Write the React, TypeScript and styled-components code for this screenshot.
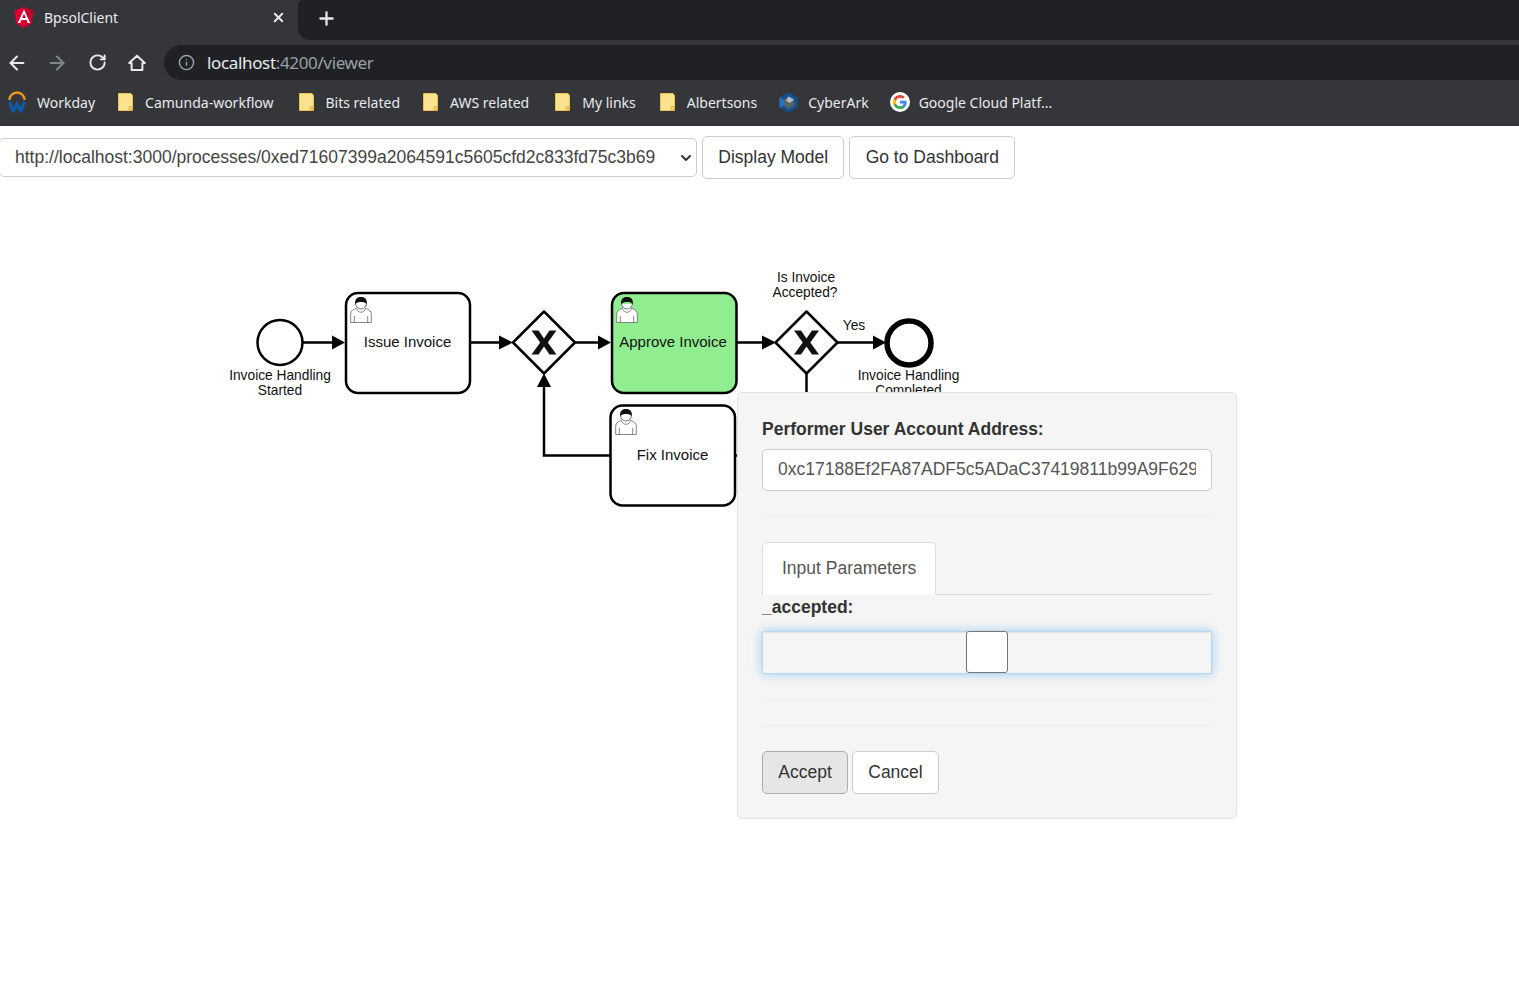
import styled, { createGlobalStyle } from "styled-components";
import { ArrowLeft, ArrowRight, ChevronDown, Info, Plus, RotateCw, X } from "lucide-react";

const GlobalStyle = createGlobalStyle`
  html, body {
    margin: 0;
    height: 100%;
    overflow: hidden;
    background: #fff;
  }
  * { box-sizing: border-box; }
`;

const CHROME_FONT = `"Noto Sans", "Open Sans", sans-serif`;
const PAGE_FONT = `"Liberation Sans", Arial, sans-serif`;

function AngularIcon() {
  return (
    <svg width="20" height="22" viewBox="0 0 20 22">
      <path d="M10 0 L19.4 3.4 L17.9 16.4 L10 21 Z" fill="#c3002f" />
      <path d="M10 0 L0.6 3.4 L2.1 16.4 L10 21 Z" fill="#dd0031" />
      <path
        d="M10 2.6 L3.8 16 H6.2 L7.4 13 H12.6 L13.8 16 H16.2 Z M8.2 11 L10 6.6 L11.8 11 Z"
        fill="#fff"
      />
    </svg>
  );
}

function HomeIcon() {
  return (
    <svg width="18" height="18" viewBox="0 0 18 18" fill="none">
      <path
        d="M1.2 9 L9 1.8 L16.8 9 H14.4 V16 H3.6 V9 Z"
        stroke="#e8eaed"
        strokeWidth="2"
        strokeLinejoin="round"
      />
    </svg>
  );
}

function FolderIcon() {
  return (
    <svg width="15" height="18" viewBox="0 0 15 18">
      <path d="M0.5 0.5 H13 L14.5 2.5 V17.5 H0.5 Z" fill="#fde28f" stroke="#ecc04f" />
      <path d="M11 13.500 V17 H14 V13.500 Z" fill="#f5d273" stroke="#d9a93a" strokeWidth="0.6" />
    </svg>
  );
}

function WorkdayIcon() {
  return (
    <svg width="18" height="22" viewBox="0 0 18 22" fill="none">
      <path d="M1.500 9 A7.500 7.500 0 0 1 16.500 9" stroke="#e8961e" strokeWidth="2.400" />
      <path d="M1.500 10.500 L5 20.500 L9 13 L13 20.500 L16.500 10.500" stroke="#0b5cab" strokeWidth="3" />
    </svg>
  );
}

function CyberArkIcon() {
  return (
    <svg width="19" height="21" viewBox="0 0 19 21">
      <path d="M9.500 0.500 L18.500 5.500 V15.500 L9.500 20.500 L0.500 15.500 V5.500 Z" fill="#15508f" />
      <path d="M0.500 5.500 L5 8 V13.500 L0.500 15.500 Z" fill="#2a74bd" />
      <path d="M9.500 4.500 L15 7.500 V14 L9.500 17 L5 14 V8 Z" fill="#5a636c" />
      <path d="M9.500 4.500 L15 7.500 L10.500 11 L7 8.500 Z" fill="#b4bcc4" />
    </svg>
  );
}

function GoogleIcon() {
  return (
    <svg width="20" height="20" viewBox="0 0 48 48">
      <circle cx="24" cy="24" r="24" fill="#fff" />
      <path d="M40 24.6c0-1.2-.1-2.3-.3-3.4H24v6.4h9c-.4 2.1-1.6 3.8-3.3 5v4.2h5.4c3.1-2.9 4.9-7.1 4.9-12.2z" fill="#4285f4" />
      <path d="M24 41c4.5 0 8.3-1.5 11.1-4.1l-5.4-4.2c-1.5 1-3.4 1.6-5.7 1.6-4.4 0-8.1-2.9-9.4-6.9H9v4.3C11.8 37.2 17.4 41 24 41z" fill="#34a853" />
      <path d="M14.6 27.4c-.3-1-.5-2.1-.5-3.4s.2-2.3.5-3.4v-4.3H9C7.900 18.600 7 21.200 7 24s.9 5.400 2 7.700z" fill="#fbbc05" />
      <path d="M24 13.700c2.500 0 4.700.9 6.500 2.500l4.800-4.800C32.300 8.700 28.500 7 24 7 17.400 7 11.800 10.800 9 16.300l5.600 4.300c1.300-4 5-6.900 9.400-6.900z" fill="#ea4335" />
    </svg>
  );
}

const bookmarks = [
  { label: "Workday", icon: <WorkdayIcon />, gap: 11, shift: 0 },
  { label: "Camunda-workflow", icon: <FolderIcon />, gap: 12, shift: -1 },
  { label: "Bits related", icon: <FolderIcon />, gap: 12, shift: 1 },
  { label: "AWS related", icon: <FolderIcon />, gap: 12, shift: -1 },
  { label: "My links", icon: <FolderIcon />, gap: 12, shift: 2 },
  { label: "Albertsons", icon: <FolderIcon />, gap: 12, shift: 0 },
  { label: "CyberArk", icon: <CyberArkIcon />, gap: 10, shift: -2 },
  { label: "Google Cloud Platf...", icon: <GoogleIcon />, gap: 9, shift: -3 },
];

function UserGlyph({ x, y }: { x: number; y: number }) {
  return (
    <g transform={`translate(${x} ${y})`}>
      <path
        d="M0.700 25.500 V17 C0.700 13.800 3 12.800 6.500 11.300 L8.500 9.500 H13.500 L15.500 11.300 C19 12.800 21.300 13.800 21.300 17 V25.500 Z"
        fill="#fff"
        stroke="#777"
        strokeWidth="0.900"
      />
      <path
        d="M4.300 25.500 V19 M17.700 25.500 V19 M6.500 11.500 C7.500 16.500 14.500 16.500 15.500 11.500"
        fill="none"
        stroke="#777"
        strokeWidth="0.900"
      />
      <path d="M5.600 7 C5.600 9.800 8.500 12 11 12 C13.500 12 16.400 9.800 16.400 7" fill="#fff" stroke="#666" strokeWidth="0.900" />
      <path d="M5.200 7.500 C4.200 1.800 8 0 11 0 C14 0 17.800 1.800 16.800 7.500 C15.600 5.400 13.500 4.600 11 5 C8.500 4.600 6.400 5.400 5.200 7.500 Z" fill="#111" />
    </g>
  );
}

function Gateway({ cx, cy }: { cx: number; cy: number }) {
  const cross: [number, number][] = [
    [-12.5, -12], [-5.5, -12], [0, -4], [5.5, -12], [12.5, -12], [3.8, 0],
    [12.5, 12], [5.5, 12], [0, 4], [-5.5, 12], [-12.5, 12], [-3.8, 0],
  ];
  return (
    <g>
      <path
        d={`M${cx} ${cy - 31} L${cx + 31} ${cy} L${cx} ${cy + 31} L${cx - 31} ${cy} Z`}
        fill="#fff"
        stroke="#000"
        strokeWidth="2.500"
        strokeLinejoin="round"
      />
      <polygon points={cross.map(([a, b]) => `${cx + a},${cy + b}`).join(" ")} fill="#111" />
    </g>
  );
}

function Flow({ d }: { d: string }) {
  return <path d={d} fill="none" stroke="#000" strokeWidth="2.500" />;
}

function ArrowHead({ points }: { points: string }) {
  return <polygon points={points} fill="#000" />;
}

function Diagram() {
  return (
    <Canvas viewBox="0 179 1519 340" width="1519" height="340">
      <Flow d="M302 342.500 H335" />
      <ArrowHead points="332,335.500 345,342.500 332,349.500" />
      <Flow d="M470 342.500 H502" />
      <ArrowHead points="499,335.500 513,342.500 499,349.500" />
      <Flow d="M575 342.500 H600" />
      <ArrowHead points="598,335.500 611,342.500 598,349.500" />
      <Flow d="M737 342.500 H765" />
      <ArrowHead points="762,335.500 776,342.500 762,349.500" />
      <Flow d="M838 342.500 H875" />
      <ArrowHead points="873,335.500 886,342.500 873,349.500" />
      <Flow d="M610 455.500 H544 V385" />
      <Flow d="M806.500 374 V455.500 H736" />

      <circle cx="280" cy="342.500" r="22.500" fill="#fff" stroke="#000" strokeWidth="2.500" />
      <Task x={346} y={293} width={124} height={100} rx={12} />
      <Gateway cx={544} cy={342.500} />
      <ArrowHead points="537,387 544,373.500 551,387" />
      <Task x={612} y={293} width={124.500} height={100} rx={12} $active />
      <Task x={610.500} y={405.500} width={124.500} height={100} rx={12} />
      <Gateway cx={806.500} cy={342.500} />
      <circle cx="909" cy="343" r="22" fill="#fff" stroke="#000" strokeWidth="5.500" />

      <UserGlyph x={350} y={297} />
      <UserGlyph x={616} y={297} />
      <UserGlyph x={615} y={409} />

      <TaskLabel x={407.500} y={347}>Issue Invoice</TaskLabel>
      <TaskLabel x={673} y={347}>Approve Invoice</TaskLabel>
      <TaskLabel x={672.500} y={460}>Fix Invoice</TaskLabel>

      <FlowLabel x={280} y={380}>Invoice Handling</FlowLabel>
      <FlowLabel x={280} y={395}>Started</FlowLabel>
      <FlowLabel x={806} y={282}>Is Invoice</FlowLabel>
      <FlowLabel x={805} y={297}>Accepted?</FlowLabel>
      <FlowLabel x={854} y={330}>Yes</FlowLabel>
      <FlowLabel x={908.500} y={380}>Invoice Handling</FlowLabel>
      <FlowLabel x={908.500} y={395}>Completed</FlowLabel>
    </Canvas>
  );
}

export default function App() {
  return (
    <>
      <GlobalStyle />
      <Browser>
        <TabStrip>
          <Tab>
            <AngularIcon />
            <TabTitle>BpsolClient</TabTitle>
            <X size={15} color="#e8eaed" strokeWidth={3} />
          </Tab>
          <TabRest>
            <Plus size={21} color="#e8eaed" strokeWidth={2.6} />
          </TabRest>
        </TabStrip>
        <Toolbar>
          <NavIcon><ArrowLeft size={22} color="#e8eaed" strokeWidth={2.2} /></NavIcon>
          <NavIcon><ArrowRight size={22} color="#80868b" strokeWidth={2.2} /></NavIcon>
          <NavIcon><RotateCw size={19} color="#e8eaed" strokeWidth={2.4} /></NavIcon>
          <NavIcon><HomeIcon /></NavIcon>
          <Omnibox>
            <Info size={17} color="#9aa0a6" strokeWidth={2} />
            <Url>
              localhost<UrlRest>:4200/viewer</UrlRest>
            </Url>
          </Omnibox>
        </Toolbar>
        <BookmarkBar>
          {bookmarks.map((b) => (
            <Bookmark key={b.label} $gap={b.gap} $shift={b.shift}>
              {b.icon}
              <span>{b.label}</span>
            </Bookmark>
          ))}
        </BookmarkBar>
      </Browser>

      <Page>
        <ActionRow>
          <SelectWrap>
            <ProcessSelect defaultValue="p1">
              <option value="p1">http://localhost:3000/processes/0xed71607399a2064591c5605cfd2c833fd75c3b69</option>
            </ProcessSelect>
            <SelectChevron>
              <ChevronDown size={16} color="#333" strokeWidth={3} />
            </SelectChevron>
          </SelectWrap>
          <Button>Display Model</Button>
          <Button>Go to Dashboard</Button>
        </ActionRow>
        <Diagram />
        <Panel>
          <FieldLabel>Performer User Account Address:</FieldLabel>
          <TextInput readOnly value="0xc17188Ef2FA87ADF5c5ADaC37419811b99A9F62983f1" />
          <Rule />
          <TabList>
            <TabItem>Input Parameters</TabItem>
          </TabList>
          <FieldLabel>_accepted:</FieldLabel>
          <CheckField>
            <BigCheckbox type="checkbox" />
          </CheckField>
          <Rule />
          <Rule />
          <ButtonRow>
            <Button $pressed>Accept</Button>
            <Button>Cancel</Button>
          </ButtonRow>
        </Panel>
      </Page>
    </>
  );
}

const Browser = styled.header`
  height: 126px;
  background: #35363a;
  font-family: ${CHROME_FONT};
  color: #e8eaed;
`;

const TabStrip = styled.div`
  display: flex;
  height: 40px;
`;

const Tab = styled.div`
  width: 298px;
  display: flex;
  align-items: center;
  padding: 0 12px 5px 14px;
  svg:first-child {
    flex: none;
  }
`;

const TabTitle = styled.span`
  flex: 1;
  margin-left: 10px;
  font-size: 14px;
`;

const TabRest = styled.div`
  flex: 1;
  display: flex;
  align-items: center;
  padding: 0 0 4px 18px;
  background: #202124;
  border-radius: 5px 0 0 12px;
`;

const Toolbar = styled.div`
  height: 40px;
  padding: 5px 0 0 0;
  display: flex;
  align-items: center;
`;

const NavIcon = styled.div`
  width: 40px;
  margin-left: -3px;
  margin-right: 3px;
  display: flex;
  justify-content: center;
`;

const Omnibox = styled.div`
  flex: 1;
  height: 35px;
  margin-left: 4px;
  padding-left: 14px;
  display: flex;
  align-items: center;
  gap: 12px;
  background: #202124;
  border-radius: 18px 0 0 18px;
`;

const Url = styled.span`
  font-size: 17px;
  letter-spacing: -0.35px;
  color: #e8eaed;
`;

const UrlRest = styled.span`
  color: #9aa0a6;
`;

const BookmarkBar = styled.nav`
  height: 46px;
  padding: 0 0 2px 8px;
  display: flex;
  align-items: center;
  gap: 24px;
  font-size: 14px;
`;

const Bookmark = styled.div<{ $gap: number; $shift: number }>`
  display: flex;
  align-items: center;
  gap: ${(p) => p.$gap}px;
  margin-left: ${(p) => p.$shift}px;
  white-space: nowrap;
`;

const Page = styled.main`
  position: relative;
  font-family: ${PAGE_FONT};
  font-size: 17.500px;
  color: #333;
`;

const ActionRow = styled.div`
  display: flex;
  align-items: center;
  gap: 5px;
  padding-top: 10px;
  margin-left: -1px;
`;

const SelectWrap = styled.div`
  position: relative;
  display: flex;
`;

const ProcessSelect = styled.select`
  appearance: none;
  width: 698px;
  height: 39px;
  padding: 0 0 2px 15px;
  font-family: ${PAGE_FONT};
  font-size: 17.500px;
  color: #444;
  background: #fff;
  border: 1px solid #ccc;
  border-radius: 5px;
`;

const SelectChevron = styled.span`
  position: absolute;
  top: 12px;
  right: 3px;
  display: flex;
  pointer-events: none;
`;

const Button = styled.button<{ $pressed?: boolean }>`
  height: 43px;
  padding: 0 15.250px;
  font-family: ${PAGE_FONT};
  font-size: 17.500px;
  color: #333;
  background: ${(p) => (p.$pressed ? "#e6e6e6" : "#fff")};
  border: 1px solid ${(p) => (p.$pressed ? "#adadad" : "#ccc")};
  border-radius: 5px;
`;

const Canvas = styled.svg`
  display: block;
`;

const Task = styled.rect<{ $active?: boolean }>`
  fill: ${(p) => (p.$active ? "#90ee90" : "#fff")};
  stroke: #000;
  stroke-width: 2.500px;
`;

const TaskLabel = styled.text`
  font-family: ${PAGE_FONT};
  font-size: 15px;
  text-anchor: middle;
  fill: #111;
`;

const FlowLabel = styled.text`
  font-family: ${PAGE_FONT};
  font-size: 13.750px;
  text-anchor: middle;
  fill: #111;
`;

const Panel = styled.section`
  position: absolute;
  top: 266px;
  left: 737px;
  width: 500px;
  height: 427px;
  padding: 24px;
  background: #f5f5f5;
  border: 1px solid #e3e3e3;
  border-radius: 5px;
`;

const FieldLabel = styled.label`
  display: block;
  height: 25px;
  line-height: 25px;
  margin-bottom: 7px;
  font-weight: 700;
`;

const TextInput = styled.input`
  display: block;
  width: 100%;
  height: 42px;
  padding: 0 15px 2px;
  font-family: ${PAGE_FONT};
  font-size: 17.500px;
  color: #555;
  background: #fff;
  border: 1px solid #ccc;
  border-radius: 5px;
  outline: none;
`;

const Rule = styled.hr`
  margin: 25px 0;
  border: 0;
  border-top: 1px solid #eee;
  & + & {
    margin-top: 0;
  }
`;

const TabList = styled.div`
  display: flex;
  height: 53px;
  border-bottom: 1px solid #ddd;
`;

const TabItem = styled.div`
  height: 53px;
  padding: 0 19px;
  display: flex;
  align-items: center;
  color: #555;
  background: #fff;
  border: 1px solid #ddd;
  border-bottom-color: #fff;
  border-radius: 5px 5px 0 0;
`;

const CheckField = styled.div`
  height: 42.500px;
  margin-top: 11px;
  display: flex;
  justify-content: center;
  border: 1px solid #b8d6ee;
  box-shadow: inset 0 1px 1px rgba(0, 0, 0, 0.075), 0 0 10px rgba(102, 175, 233, 0.6);
`;

const BigCheckbox = styled.input`
  appearance: none;
  width: 42px;
  height: 42px;
  margin: -1px 0 0;
  background: #fff;
  border: 1.500px solid #767676;
  border-radius: 3px;
`;

const ButtonRow = styled.div`
  display: flex;
  gap: 4px;
`;
